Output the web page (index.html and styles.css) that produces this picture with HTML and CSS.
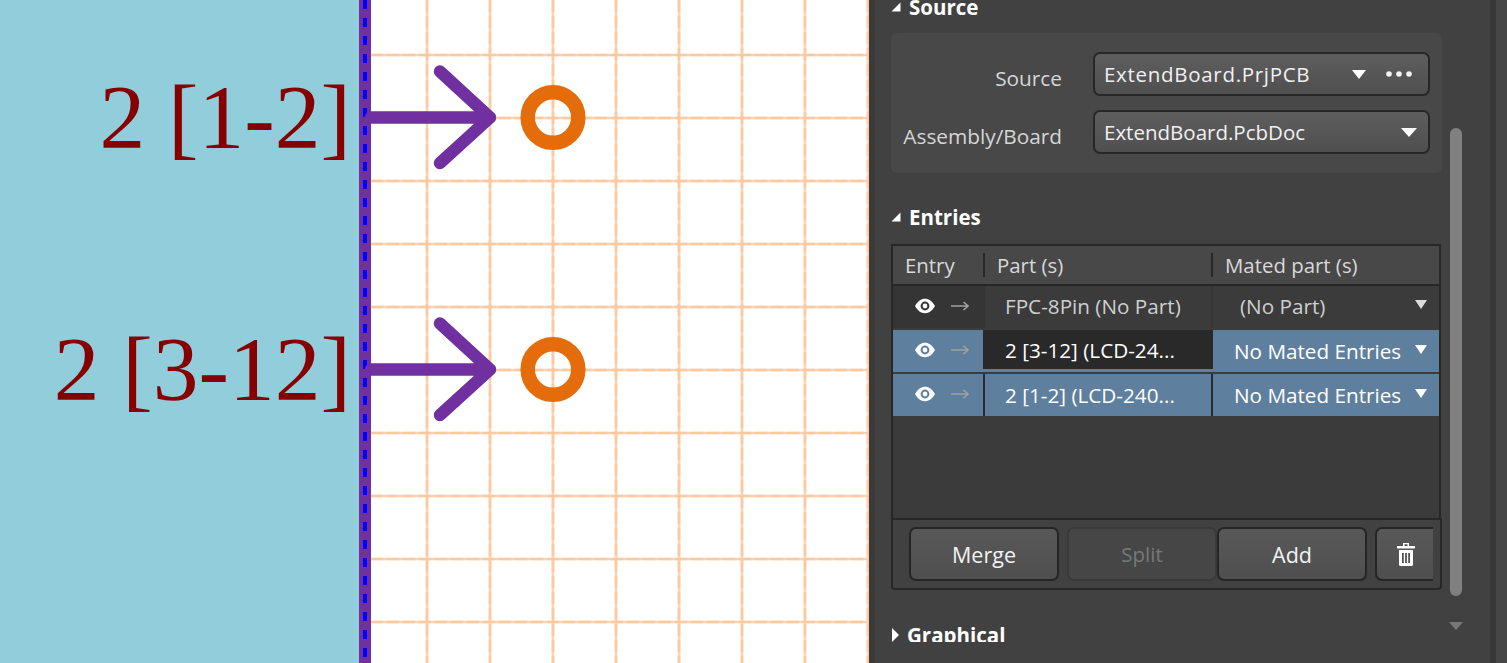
FILE: index.html
```html
<!DOCTYPE html>
<html lang="en">
<head>
    <meta charset="UTF-8">
    <meta name="viewport" content="width=device-width, initial-scale=1.0">
    <title>Connection Manager</title>
    <link rel="stylesheet" href="styles.css">
</head>
<body>
    <div class="canvas">
        <svg class="drawing" width="869" height="663" viewBox="0 0 869 663">
            <rect x="0" y="0" width="359" height="663" fill="#92cddc"/>
            <g class="grid">
                <path d="M427 0V663M490 0V663M553 0V663M616 0V663M679 0V663M742 0V663M805 0V663M868 0V663"/>
                <path d="M371 55H869M371 118H869M371 181H869M371 244H869M371 307H869M371 370H869M371 433H869M371 496H869M371 559H869M371 622H869"/>
            </g>
            <g class="grid-dash">
                <path d="M427 0V663M490 0V663M553 0V663M616 0V663M679 0V663M742 0V663M805 0V663M868 0V663"/>
                <path d="M371 55H869M371 118H869M371 181H869M371 244H869M371 307H869M371 370H869M371 433H869M371 496H869M371 559H869M371 622H869"/>
            </g>
            <rect x="359" y="0" width="12" height="663" fill="#7030a0"/>
            <line class="edge-dash" x1="365" y1="0" x2="365" y2="663"/>

            <text class="pin-label" x="351" y="148">2 [1-2]</text>
            <path class="pin-arrow" d="M371 117.500H490M440 71.500L490 117.500L440 163"/>
            <circle class="pin-ring" cx="553" cy="117.500" r="25.300"/>

            <text class="pin-label" x="351" y="400">2 [3-12]</text>
            <path class="pin-arrow" d="M371 369.500H490M440 323.500L490 369.500L440 415"/>
            <circle class="pin-ring" cx="553" cy="369.500" r="25.300"/>
        </svg>
    </div>

    <div class="panel">
        <div class="panel-scroll">
            <div class="section-head first">
                <svg class="caret" width="10" height="10" viewBox="0 0 10 10"><polygon points="9.500,0.500 9.500,9.500 0.500,9.500"/></svg>
                <span>Source</span>
            </div>
            <div class="source-card">
                <div class="field">
                    <label class="field-label">Source</label>
                    <div class="combo">
                        <span class="combo-text wide">ExtendBoard.PrjPCB</span>
                        <svg class="combo-arrow" width="14" height="9" viewBox="0 0 14 9"><polygon points="0,0 14,0 7,9"/></svg>
                        <svg class="combo-more" width="26" height="6" viewBox="0 0 26 6"><circle cx="3" cy="3" r="2.800"/><circle cx="13" cy="3" r="2.800"/><circle cx="23" cy="3" r="2.800"/></svg>
                    </div>
                </div>
                <div class="field">
                    <label class="field-label">Assembly/Board</label>
                    <div class="combo">
                        <span class="combo-text">ExtendBoard.PcbDoc</span>
                        <svg class="combo-arrow" width="16" height="9" viewBox="0 0 16 9"><polygon points="0,0 16,0 8,9"/></svg>
                    </div>
                </div>
            </div>

            <div class="section-head entries-head">
                <svg class="caret" width="10" height="10" viewBox="0 0 10 10"><polygon points="9.500,0.500 9.500,9.500 0.500,9.500"/></svg>
                <span>Entries</span>
            </div>
            <div class="entries">
                <div class="entries-list">
                    <div class="entries-header">
                        <div class="head-cell">Entry</div>
                        <div class="head-cell ruled">Part (s)</div>
                        <div class="head-cell ruled mated-head">Mated part (s)</div>
                    </div>

                    <div class="entry-row plain">
                        <div class="cell-entry">
                            <svg class="eye" width="20" height="16" viewBox="0 0 20 16"><path fill-rule="evenodd" d="M0 8C3 3 6 .8 10 .8S17 3 20 8C17 13 14 15.200 10 15.200S3 13 0 8ZM10 3.600A4.400 4.400 0 1 0 10 12.400A4.400 4.400 0 1 0 10 3.600ZM10 5.600A2.400 2.400 0 1 1 10 10.400A2.400 2.400 0 1 1 10 5.600Z"/></svg>
                            <svg class="link" width="18" height="10" viewBox="0 0 18 10"><path d="M0 5H17M12.500 1L17 5L12.500 9"/></svg>
                        </div>
                        <div class="cell-part">FPC-8Pin (No Part)</div>
                        <div class="cell-mated no-part">(No Part)
                            <svg class="mated-arrow" width="12" height="9" viewBox="0 0 12 9"><polygon points="0,0 12,0 6,9"/></svg>
                        </div>
                    </div>

                    <div class="entry-row picked editing">
                        <div class="cell-entry">
                            <svg class="eye" width="20" height="16" viewBox="0 0 20 16"><path fill-rule="evenodd" d="M0 8C3 3 6 .8 10 .8S17 3 20 8C17 13 14 15.200 10 15.200S3 13 0 8ZM10 3.600A4.400 4.400 0 1 0 10 12.400A4.400 4.400 0 1 0 10 3.600ZM10 5.600A2.400 2.400 0 1 1 10 10.400A2.400 2.400 0 1 1 10 5.600Z"/></svg>
                            <svg class="link" width="18" height="10" viewBox="0 0 18 10"><path d="M0 5H17M12.500 1L17 5L12.500 9"/></svg>
                        </div>
                        <div class="cell-part">2 [3-12] (LCD-24...</div>
                        <div class="cell-mated">No Mated Entries
                            <svg class="mated-arrow" width="12" height="9" viewBox="0 0 12 9"><polygon points="0,0 12,0 6,9"/></svg>
                        </div>
                    </div>

                    <div class="entry-row picked">
                        <div class="cell-entry">
                            <svg class="eye" width="20" height="16" viewBox="0 0 20 16"><path fill-rule="evenodd" d="M0 8C3 3 6 .8 10 .8S17 3 20 8C17 13 14 15.200 10 15.200S3 13 0 8ZM10 3.600A4.400 4.400 0 1 0 10 12.400A4.400 4.400 0 1 0 10 3.600ZM10 5.600A2.400 2.400 0 1 1 10 10.400A2.400 2.400 0 1 1 10 5.600Z"/></svg>
                            <svg class="link" width="18" height="10" viewBox="0 0 18 10"><path d="M0 5H17M12.500 1L17 5L12.500 9"/></svg>
                        </div>
                        <div class="cell-part">2 [1-2] (LCD-240...</div>
                        <div class="cell-mated">No Mated Entries
                            <svg class="mated-arrow" width="12" height="9" viewBox="0 0 12 9"><polygon points="0,0 12,0 6,9"/></svg>
                        </div>
                    </div>
                </div>
                <div class="entries-footer">
                    <button class="btn">Merge</button>
                    <button class="btn off">Split</button>
                    <button class="btn after-split">Add</button>
                    <button class="btn trash">
                        <svg width="18" height="23" viewBox="0 0 18 23"><path fill-rule="evenodd" d="M6 0H12V3H18V5.500H0V3H6ZM7.500 1.300V3H10.500V1.300ZM2 7H16V21.500Q16 23 14.500 23H3.500Q2 23 2 21.500ZM5 10V20H6.800V10ZM8.100 10V20H9.900V10ZM11.200 10V20H13V10Z"/></svg>
                    </button>
                </div>
            </div>

            <div class="section-head graphical-head">
                <svg class="caret closed" width="9" height="14" viewBox="0 0 9 14"><polygon points="1,0 8,7 1,14"/></svg>
                <span>Graphical</span>
            </div>
        </div>

        <div class="scroll-track">
            <div class="scroll-thumb"></div>
            <svg class="scroll-down" width="14" height="8" viewBox="0 0 14 8"><polygon points="0,0 14,0 7,8"/></svg>
        </div>
        <div class="panel-gutter"></div>
    </div>
</body>
</html>
```

FILE: styles.css
```css
* {
    box-sizing: border-box;
}
body {
    margin: 0;
    width: 1507px;
    height: 663px;
    overflow: hidden;
    display: flex;
    background: #414141;
    font-family: 'Open Sans', 'Noto Sans', sans-serif;
    color: #e6e6e6;
}

/* left side, the drawing */
.canvas {
    width: 869px;
    height: 663px;
    background: #fff;
    flex: none;
}
.drawing {
    display: block;
}
.grid path {
    fill: none;
    stroke: #fdd2b0;
    stroke-width: 2.600;
}
.grid-dash path {
    fill: none;
    stroke: #fcc9a1;
    stroke-width: 2.600;
    stroke-dasharray: 12 4;
}
.edge-dash {
    stroke: #0000ff;
    stroke-width: 4;
    stroke-dasharray: 9 9;
}
.pin-label {
    font-family: 'Liberation Serif', serif;
    font-size: 91.500px;
    fill: #860000;
    text-anchor: end;
}
.pin-arrow {
    fill: none;
    stroke: #7030a0;
    stroke-width: 12.500;
    stroke-linecap: round;
    stroke-linejoin: round;
}
.pin-ring {
    fill: none;
    stroke: #e46c0a;
    stroke-width: 14.500;
}

/* right side, the properties panel */
.panel {
    flex: 1;
    height: 663px;
    display: flex;
    border-left: 6px solid #3a3a3a;
}
.panel-scroll {
    width: 551px;
    height: 642px;
    margin-left: 16px;
    overflow: hidden;
    flex: none;
}
.section-head {
    height: 28px;
    display: flex;
    align-items: center;
    font-size: 20.500px;
    font-weight: 700;
    color: #fff;
}
.section-head .caret {
    margin-right: 8px;
    fill: #fff;
}
.section-head.first {
    margin-top: -7px;
    margin-bottom: 12px;
}
.entries-head {
    margin-top: 30px;
    margin-bottom: 13px;
}
.graphical-head {
    margin-top: 31px;
}
.section-head .caret.closed {
    margin-right: 7px;
}

.source-card {
    width: 551px;
    height: 140px;
    padding: 19px 12px 0 0;
    background: #484848;
    border-radius: 6px;
}
.field {
    display: flex;
    align-items: center;
    margin-bottom: 14px;
}
.field-label {
    width: 171px;
    padding-top: 8px;
    text-align: right;
    font-size: 20.800px;
    color: #d6d6d6;
    flex: none;
}
.combo {
    width: 337px;
    height: 44px;
    margin-left: 31px;
    padding: 0 11px 0 9px;
    display: flex;
    align-items: center;
    border: 2px solid #272727;
    border-radius: 7px;
    background: linear-gradient(#5e5e5e, #4f4f4f);
    font-size: 20.500px;
    color: #f0f0f0;
}
.combo-text {
    flex: 1;
}
.combo-text.wide {
    letter-spacing: 0.700px;
}
.combo-arrow {
    fill: #fff;
}
.combo-more {
    margin-left: 20px;
    margin-right: 5px;
    fill: #f2f2f2;
}

.entries {
    width: 551px;
    height: 346px;
    display: flex;
    flex-direction: column;
}
.entries-list {
    width: 550px;
    height: 276px;
    border: 2px solid #272727;
    border-bottom: none;
    background: #3b3b3b;
}
.entries-header {
    height: 40px;
    display: grid;
    grid-template-columns: 92px 228px 226px;
    align-items: center;
    background: #484848;
    border-bottom: 2px solid #272727;
    font-size: 20.400px;
    color: #d9d9d9;
}
.head-cell {
    height: 24px;
    line-height: 24px;
    padding-left: 12px;
}
.head-cell.ruled {
    margin-left: -2px;
    padding-left: 12px;
    border-left: 2px solid #272727;
}
.mated-head {
    padding-left: 13px;
}
.entry-row {
    height: 42px;
    margin-bottom: 2px;
    display: grid;
    grid-template-columns: 92px 228px 226px;
    align-items: stretch;
    font-size: 20.700px;
}
.cell-entry {
    display: flex;
    align-items: center;
    padding-left: 22px;
    padding-bottom: 3px;
    border-right: 2px solid #2f2f2f;
}
.cell-entry .eye {
    fill: #fff;
}
.cell-entry .link {
    margin-left: 16px;
    fill: none;
    stroke: #a0a0a0;
    stroke-width: 1.600;
}
.cell-part {
    display: flex;
    align-items: center;
    padding-left: 20px;
    border-right: 2px solid #2f2f2f;
}
.cell-mated {
    display: flex;
    align-items: center;
    justify-content: space-between;
    padding: 0 12px 0 21px;
}
.mated-arrow {
    margin-bottom: 3px;
    fill: #fff;
}
.entry-row.plain {
    background: #3c3c3c;
    color: #cfcfcf;
}
.entry-row.plain .cell-entry {
    background: #353535;
    border-right-color: #353535;
}
.entry-row.plain .cell-part {
    padding-bottom: 2px;
    background: #3b3b3b;
    border-right-color: #363636;
}
.entry-row.plain .cell-mated {
    padding-bottom: 2px;
    background: #3b3b3b;
}
.entry-row.plain .mated-arrow {
    fill: #dcdcdc;
}
.entry-row.plain .no-part {
    padding-left: 27px;
}
.entry-row.picked {
    background: #5f7f9f;
    color: #fff;
}
.entry-row.picked .cell-entry,
.entry-row.picked .cell-part {
    border-right-color: #2a2a2a;
}
.entry-row.editing .cell-entry {
    border-right-color: #5f7f9f;
}
.entry-row.editing .cell-part {
    margin: 0 0 3px -2px;
    padding-left: 22px;
    background: #292929;
    border-right-color: #292929;
}
.no-part {
    display: flex;
}

.entries-footer {
    height: 72px;
    padding: 7px 0 0 16px;
    display: flex;
    background: #414141;
    border: 2px solid #272727;
    border-radius: 0 0 4px 4px;
}
.btn {
    width: 150px;
    height: 54px;
    padding: 0;
    margin-right: 8px;
    display: flex;
    align-items: center;
    justify-content: center;
    font-family: inherit;
    font-size: 21.500px;
    color: #f2f2f2;
    background: linear-gradient(#585858, #4f4f4f);
    border: 2px solid #252525;
    border-radius: 7px;
}
.btn.off {
    margin-right: 0;
    font-size: 20.500px;
    color: #787878;
    background: #464646;
    border-color: #3a3a3a;
}
.btn.trash {
    width: 58px;
    margin-right: 0;
    border-right: none;
    border-radius: 7px 0 0 7px;
}
.btn.trash svg {
    fill: #fff;
    margin-left: 2px;
}

.scroll-track {
    width: 12px;
    margin-left: 8px;
    padding-top: 128px;
    flex: none;
    display: flex;
    flex-direction: column;
    align-items: center;
}
.scroll-thumb {
    width: 12px;
    height: 468px;
    background: #808080;
    border-radius: 6px;
}
.scroll-down {
    margin-top: 26px;
    fill: #787878;
    flex: none;
}
.panel-gutter {
    width: 17px;
    margin-left: 28px;
    border-left: 6px solid #383838;
    background: #464646;
    flex: none;
}
```
